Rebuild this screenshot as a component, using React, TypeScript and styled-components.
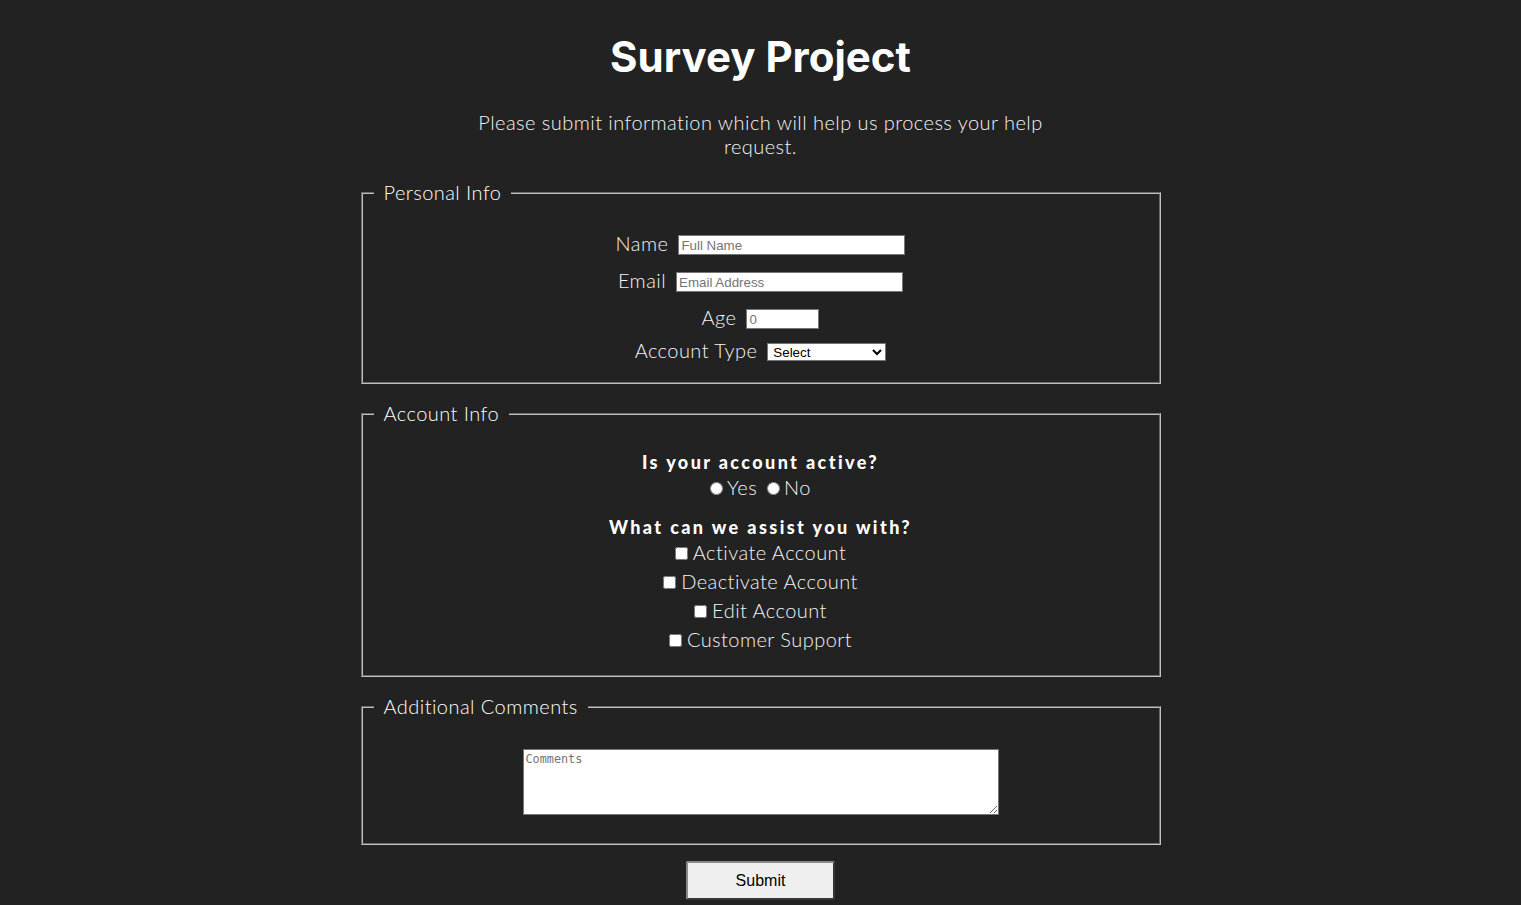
import React from "react";
import styled, { createGlobalStyle } from "styled-components";

const GlobalStyle = createGlobalStyle`
  html, body {
    margin: 0;
    padding: 0;
    background: #222222;
  }
  body {
    font-family: Lato, "Noto Sans", sans-serif;
    font-weight: 300;
    letter-spacing: 0.45px;
    color: #f4f4f4;
  }
`;

const Page = styled.main`
  display: flex;
  flex-direction: column;
  align-items: center;
  padding: 31px 0 5px;
`;

const Title = styled.h1`
  margin: 0;
  font-family: Inter, Lato, sans-serif;
  font-weight: 700;
  font-size: 42px;
  line-height: 52px;
  letter-spacing: 0;
  color: #ffffff;
`;

const Subtitle = styled.p`
  margin: 27px 0 23px;
  max-width: 600px;
  font-size: 20px;
  line-height: 24px;
  text-align: center;
`;

const Form = styled.form`
  display: flex;
  flex-direction: column;
  align-items: center;
`;

const Fieldset = styled.fieldset`
  box-sizing: border-box;
  width: 800px;
  margin: 0 0 18px;
  padding: 0 11px;
  border: 2px groove #c0c0c0;
  min-width: 0;
`;

const Legend = styled.legend`
  padding: 0 10px 1px;
  font-size: 20px;
  line-height: 22px;
  color: #ffffff;
`;

const Section = styled.div<{ $pt: number; $pb: number }>`
  display: flex;
  flex-direction: column;
  align-items: center;
  padding: ${(p) => p.$pt}px 0 ${(p) => p.$pb}px;
`;

const FieldRow = styled.div<{ $tight?: boolean }>`
  display: flex;
  align-items: center;
  gap: 10px;
  height: 24px;
  margin-top: ${(p) => (p.$tight ? 9 : 13)}px;
  &:first-child {
    margin-top: 0;
  }
`;

const Label = styled.label`
  font-size: 20px;
  line-height: 24px;
  padding-bottom: 3px;
`;

const TextInput = styled.input<{ $w: number }>`
  box-sizing: border-box;
  width: ${(p) => p.$w}px;
  height: 20px;
  margin-top: 2px;
  padding: 1px 2px;
  border: 1px solid #767676;
  border-radius: 0;
  background: #ffffff;
  color: #000;
  font-family: "Liberation Sans", Arial, sans-serif;
  font-size: 13.33px;
  letter-spacing: 0;
  outline: none;
  &::placeholder {
    color: #757575;
  }
`;

const Select = styled.select`
  box-sizing: border-box;
  width: 119px;
  height: 18px;
  margin-top: 2px;
  padding: 0 1px;
  border: 1px solid #767676;
  border-radius: 0;
  background: #ffffff;
  color: #000;
  font-family: "Liberation Sans", Arial, sans-serif;
  font-size: 13.33px;
  letter-spacing: 0;
`;

const Question = styled.h3<{ $gap?: number }>`
  margin: ${(p) => p.$gap ?? 0}px 0 0;
  font-family: Lato, sans-serif;
  font-weight: 900;
  font-size: 18px;
  line-height: 24px;
  letter-spacing: 2.4px;
  color: #ffffff;
`;

const RadioRow = styled.div`
  display: flex;
  align-items: center;
  gap: 10px;
  height: 28px;
`;

const Option = styled.label`
  display: inline-flex;
  align-items: center;
  gap: 4px;
  font-size: 20px;
  line-height: 24px;
`;

const OptionText = styled.span`
  padding-bottom: 3px;
`;

const CheckRow = styled.label`
  display: flex;
  align-items: center;
  gap: 5px;
  height: 29px;
  font-size: 20px;
  line-height: 24px;
`;

const Box = styled.input`
  width: 13px;
  height: 13px;
  margin: 0;
`;

const Comments = styled.textarea`
  box-sizing: border-box;
  width: 476px;
  height: 66px;
  padding: 2px;
  border: 1px solid #767676;
  border-radius: 0;
  background: #ffffff;
  font-family: "DejaVu Sans Mono", "Liberation Mono", monospace;
  font-size: 11.8px;
  letter-spacing: 0;
  &::placeholder {
    color: #757575;
  }
`;

const Submit = styled.button`
  box-sizing: border-box;
  width: 149px;
  height: 39px;
  margin-top: -2px;
  border: 2px outset #8a8a8a;
  border-radius: 2px;
  background: #efefef;
  color: #000;
  font-family: "Liberation Sans", Arial, sans-serif;
  font-size: 16px;
  letter-spacing: 0;
`;

const needs = ["Activate Account", "Deactivate Account", "Edit Account", "Customer Support"];

export default function App() {
  return (
    <>
      <GlobalStyle />
      <Page>
        <Title>Survey Project</Title>
        <Subtitle>
          Please submit information which will help us process your help request.
        </Subtitle>
        <Form onSubmit={(e) => e.preventDefault()}>
          <Fieldset>
            <Legend>Personal Info</Legend>
            <Section $pt={28} $pb={19}>
              <FieldRow>
                <Label htmlFor="name">Name</Label>
                <TextInput id="name" $w={227} placeholder="Full Name" />
              </FieldRow>
              <FieldRow>
                <Label htmlFor="email">Email</Label>
                <TextInput id="email" $w={227} placeholder="Email Address" />
              </FieldRow>
              <FieldRow>
                <Label htmlFor="age">Age</Label>
                <TextInput id="age" $w={73} placeholder="0" />
              </FieldRow>
              <FieldRow $tight>
                <Label htmlFor="type">Account Type</Label>
                <Select id="type" defaultValue="select">
                  <option value="select">Select</option>
                  <option value="personal">Personal</option>
                  <option value="business">Business</option>
                </Select>
              </FieldRow>
            </Section>
          </Fieldset>

          <Fieldset>
            <Legend>Account Info</Legend>
            <Section $pt={25} $pb={20}>
              <Question>Is your account active?</Question>
              <RadioRow>
                <Option>
                  <Box type="radio" name="active" />
                  <OptionText>Yes</OptionText>
                </Option>
                <Option>
                  <Box type="radio" name="active" />
                  <OptionText>No</OptionText>
                </Option>
              </RadioRow>
              <Question $gap={13}>What can we assist you with?</Question>
              {needs.map((t) => (
                <CheckRow key={t}>
                  <Box type="checkbox" />
                  <OptionText>{t}</OptionText>
                </CheckRow>
              ))}
            </Section>
          </Fieldset>

          <Fieldset>
            <Legend>Additional Comments</Legend>
            <Section $pt={31} $pb={28}>
              <Comments placeholder="Comments" />
            </Section>
          </Fieldset>

          <Submit type="submit">Submit</Submit>
        </Form>
      </Page>
    </>
  );
}
